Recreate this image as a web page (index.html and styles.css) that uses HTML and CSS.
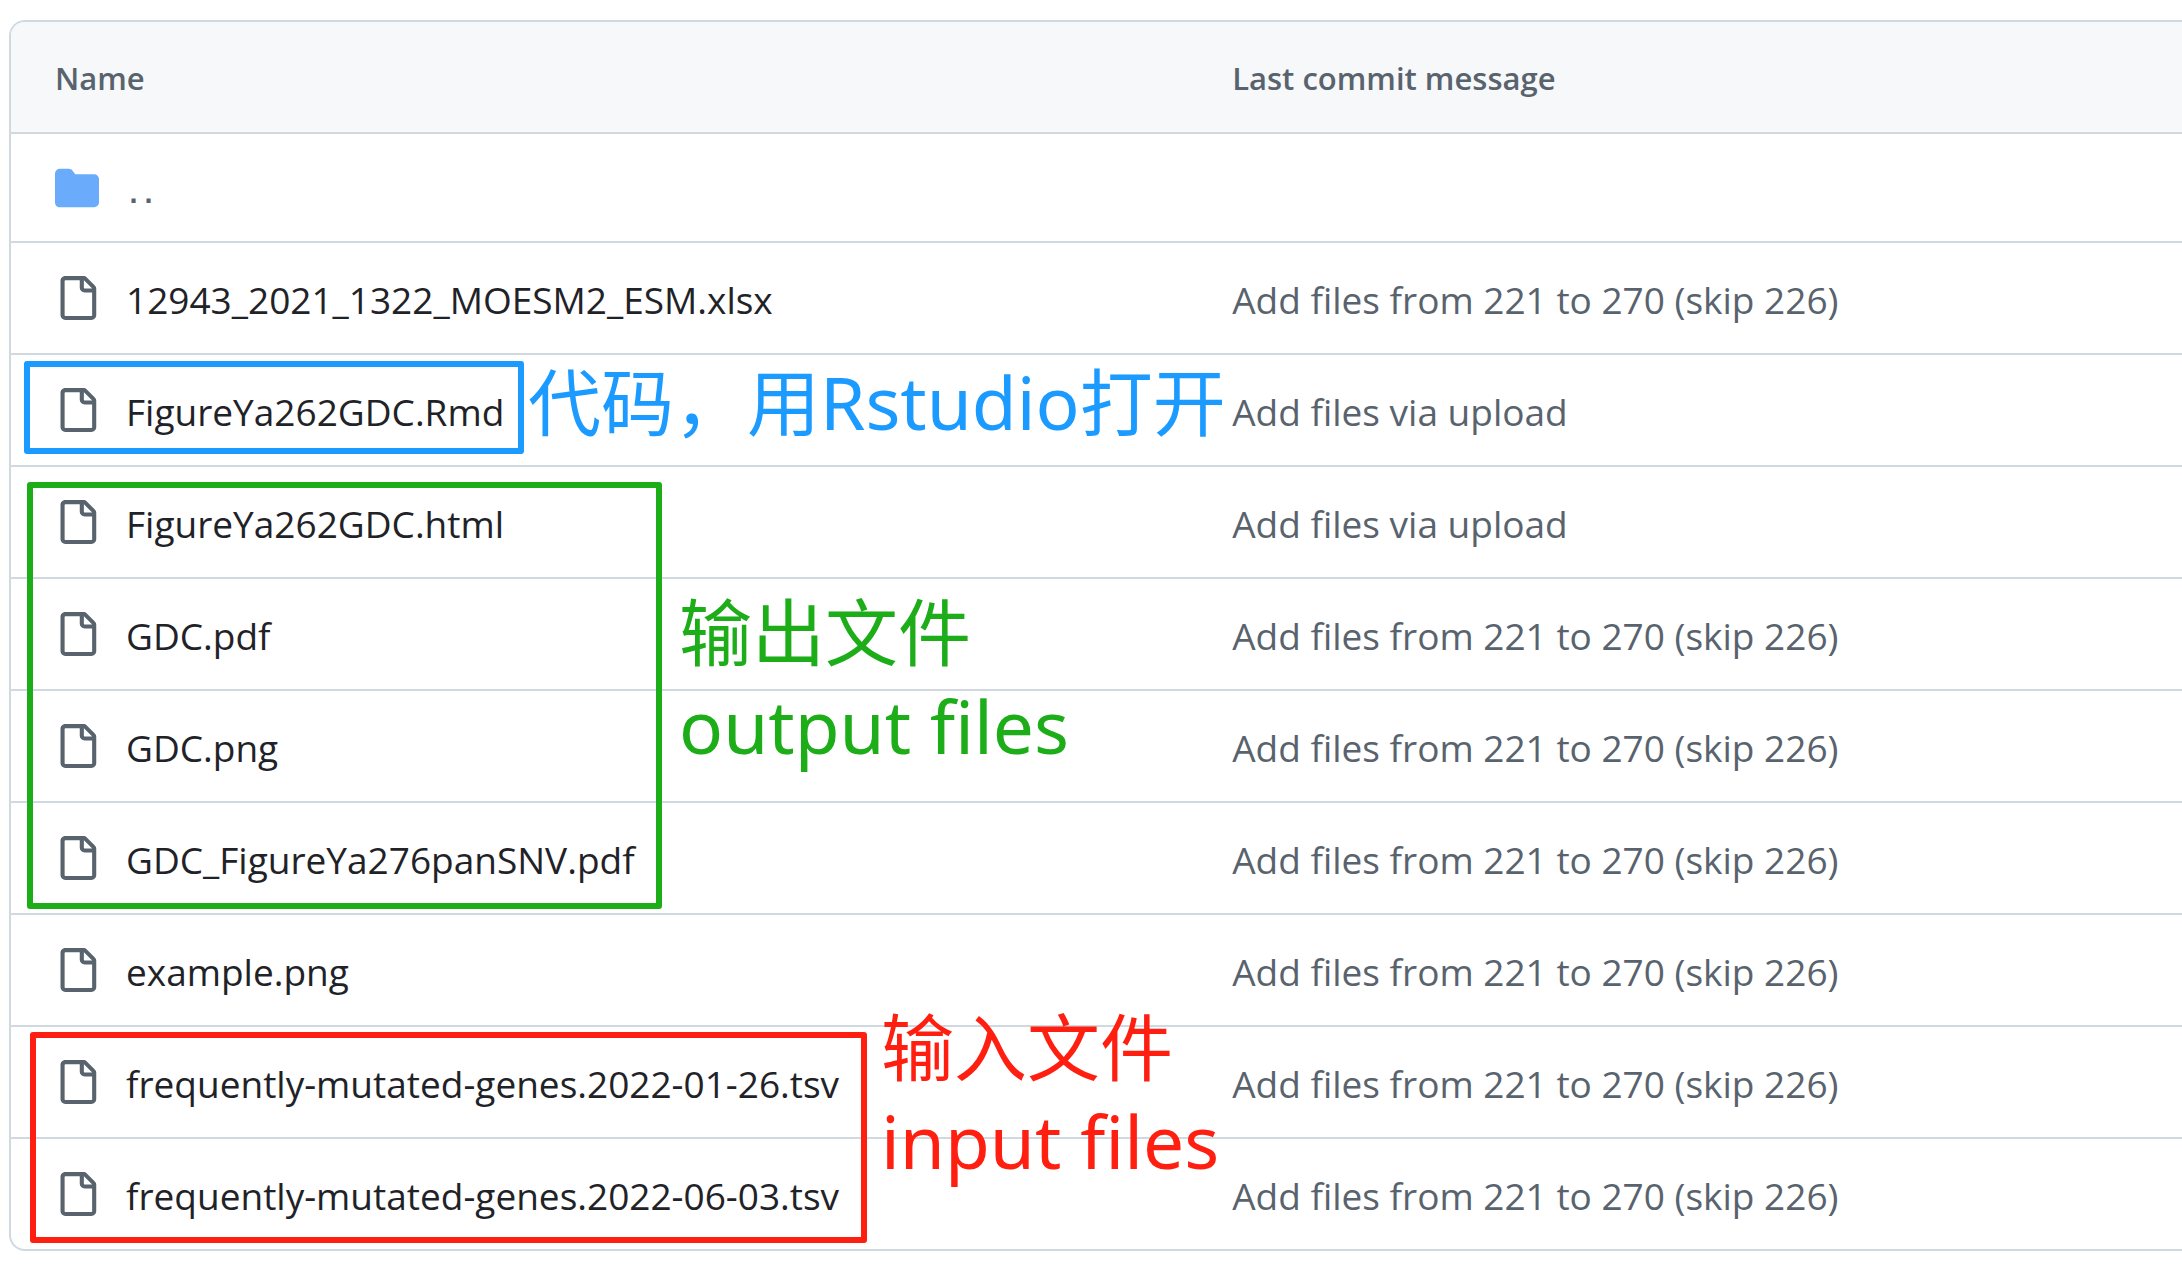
FILE: index.html
```html
<!DOCTYPE html>
<html lang="en">
<head>
<meta charset="utf-8">
<title>FigureYa262GDC files</title>
<link rel="stylesheet" href="styles.css">
</head>
<body>
<svg class="sprite" aria-hidden="true">
  <symbol id="file" viewBox="0 0 16 16"><path d="M2 1.75C2 .784 2.784 0 3.75 0h6.586c.464 0 .909.184 1.237.513l2.914 2.914c.329.328.513.773.513 1.237v9.586A1.75 1.75 0 0 1 13.25 16h-9.5A1.75 1.75 0 0 1 2 14.25Zm1.75-.25a.25.25 0 0 0-.25.25v12.5c0 .138.112.25.25.25h9.5a.25.25 0 0 0 .25-.25V6h-2.75A1.75 1.75 0 0 1 9 4.25V1.5Zm6.75.062V4.25c0 .138.112.25.25.25h2.688l-.011-.013-2.914-2.914-.013-.011Z"/></symbol>
  <symbol id="folder" viewBox="0 0 16 16"><path d="M1.75 1A1.75 1.75 0 0 0 0 2.75v10.5C0 14.216.784 15 1.75 15h12.5A1.75 1.75 0 0 0 16 13.25v-8.5A1.75 1.75 0 0 0 14.25 3H7.5a.25.25 0 0 1-.2-.1l-.9-1.2C6.07 1.26 5.55 1 5 1H1.75Z"/></symbol>
</svg>
<main class="files">
  <table class="table">
    <thead>
      <tr><th class="col-name" scope="col">Name</th><th scope="col">Last commit message</th></tr>
    </thead>
    <tbody>
      <tr class="parent"><td colspan="2"><a class="entry" href="#" aria-label="Parent directory"><svg class="icon folder"><use href="#folder"/></svg><span class="dots">..</span></a></td></tr>
      <tr><td><a class="entry" href="#"><svg class="icon"><use href="#file"/></svg><span class="label">12943_2021_1322_MOESM2_ESM.xlsx</span></a></td><td><a class="label message" href="#">Add files from 221 to 270 (skip 226)</a></td></tr>
      <tr><td><a class="entry" href="#"><svg class="icon"><use href="#file"/></svg><span class="label">FigureYa262GDC.Rmd</span></a></td><td><a class="label message" href="#">Add files via upload</a></td></tr>
      <tr><td><a class="entry" href="#"><svg class="icon"><use href="#file"/></svg><span class="label">FigureYa262GDC.html</span></a></td><td><a class="label message" href="#">Add files via upload</a></td></tr>
      <tr><td><a class="entry" href="#"><svg class="icon"><use href="#file"/></svg><span class="label">GDC.pdf</span></a></td><td><a class="label message" href="#">Add files from 221 to 270 (skip 226)</a></td></tr>
      <tr><td><a class="entry" href="#"><svg class="icon"><use href="#file"/></svg><span class="label">GDC.png</span></a></td><td><a class="label message" href="#">Add files from 221 to 270 (skip 226)</a></td></tr>
      <tr><td><a class="entry" href="#"><svg class="icon"><use href="#file"/></svg><span class="label">GDC_FigureYa276panSNV.pdf</span></a></td><td><a class="label message" href="#">Add files from 221 to 270 (skip 226)</a></td></tr>
      <tr><td><a class="entry" href="#"><svg class="icon"><use href="#file"/></svg><span class="label">example.png</span></a></td><td><a class="label message" href="#">Add files from 221 to 270 (skip 226)</a></td></tr>
      <tr><td><a class="entry" href="#"><svg class="icon"><use href="#file"/></svg><span class="label">frequently-mutated-genes.2022-01-26.tsv</span></a></td><td><a class="label message" href="#">Add files from 221 to 270 (skip 226)</a></td></tr>
      <tr><td><a class="entry" href="#"><svg class="icon"><use href="#file"/></svg><span class="label">frequently-mutated-genes.2022-06-03.tsv</span></a></td><td><a class="label message" href="#">Add files from 221 to 270 (skip 226)</a></td></tr>
    </tbody>
  </table>
  <div class="frame frame-code"></div>
  <p class="note note-code" lang="zh">代码，用Rstudio打开</p>
  <div class="frame frame-output"></div>
  <p class="note note-output" lang="zh">输出文件<br>output files</p>
  <div class="frame frame-input"></div>
  <p class="note note-input" lang="zh">输入文件<br>input files</p>
</main>
</body>
</html>
```
FILE: styles.css
```css
* { box-sizing: border-box; }

body {
  margin: 0;
  background: #fff;
  color: #1f2328;
  font: 37px/52px "Open Sans", "Noto Sans", "Noto Sans CJK SC", sans-serif;
}

.sprite { position: absolute; width: 0; height: 0; }

.files {
  position: relative;
  margin: 20px 0 0 9px;
}

.table {
  width: 100%;
  table-layout: fixed;
  border: 2px solid #d1d9e0;
  border-right: 0;
  border-radius: 16px 0 0 16px;
  border-spacing: 0;
  overflow: hidden;
}

th, td {
  height: 112px;
  padding: 0;
  text-align: left;
  vertical-align: middle;
}

th {
  height: 110px;
  padding-top: 2px;
  background: #f6f8fa;
  color: #59636e;
  font-size: 31px;
  font-weight: 600;
}

.col-name { width: 56.25%; }

th:first-child, td:first-child { padding-left: 44px; }

td { border-top: 2px solid #d1d9e0; }

.parent td { height: 109px; }

.entry {
  display: flex;
  align-items: center;
  gap: 27px;
  color: #1f2328;
  text-decoration: none;
}

.label { display: block; padding-top: 3px; }

.message { color: #59636e; text-decoration: none; }

.icon {
  flex: none;
  width: 44px;
  height: 44px;
  fill: #59636e;
}

.folder { fill: #6babfb; }

.dots {
  padding-top: 14px;
  color: #59636e;
  font-family: "DejaVu Sans Mono", monospace;
  font-size: 25px;
  font-weight: 700;
}

.frame {
  position: absolute;
  border: 6px solid;
  border-radius: 3px;
}

.note {
  position: absolute;
  margin: 0;
  font: 73px/94px "Noto Sans", "Noto Sans CJK SC", sans-serif;
  white-space: nowrap;
}

.frame-code, .note-code { color: #1b9aff; }
.frame-output, .note-output { color: #1cad19; }
.frame-input, .note-input { color: #ff1f10; }

.frame-code { left: 15px; top: 341px; width: 500px; height: 93px; }
.note-code { left: 519px; top: 335px; }
.frame-output { left: 18px; top: 462px; width: 635px; height: 427px; }
.note-output { left: 670px; top: 565px; }
.frame-input { left: 21px; top: 1012px; width: 837px; height: 211px; }
.note-input { left: 872px; top: 980px; }
```
